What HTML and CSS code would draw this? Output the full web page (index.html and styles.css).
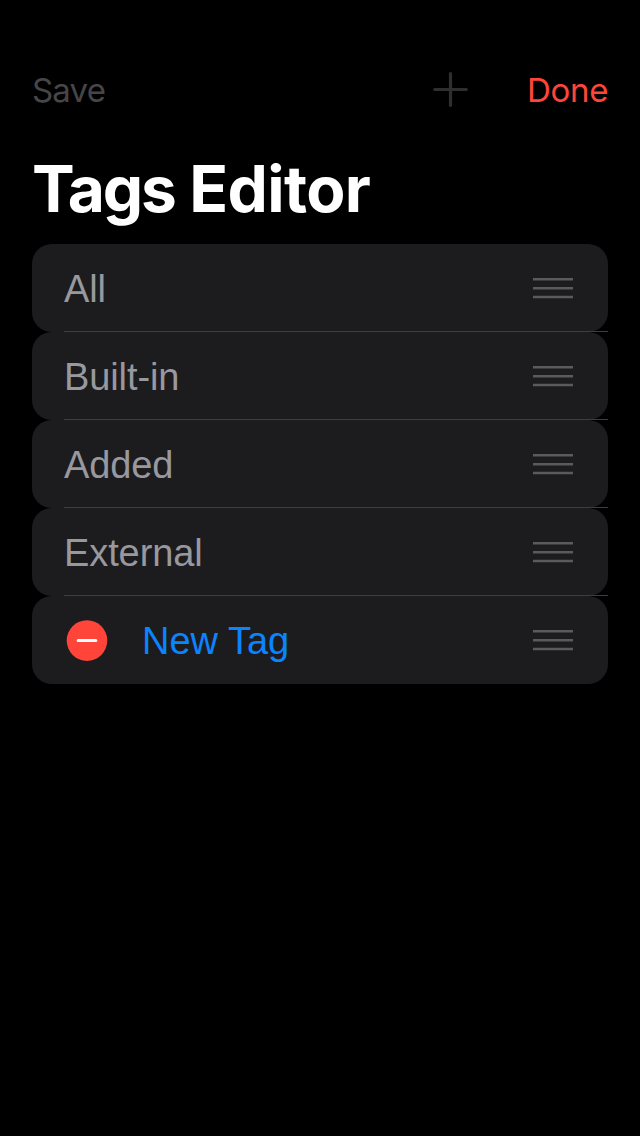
FILE: index.html
```html
<!DOCTYPE html>
<html lang="en">
<head>
<meta charset="utf-8">
<title>Tags Editor</title>
<link rel="stylesheet" href="styles.css">
</head>
<body>
<header class="navbar">
  <span class="save">Save</span>
  <svg class="add" width="36" height="36" viewBox="0 0 36 36"><path d="M18.5 1.7V33.3M2.7 17.5H34.3"/></svg>
  <span class="done">Done</span>
</header>
<h1 class="title"><span class="title-lead">Tags</span> Editor</h1>
<ul class="list">
  <li class="row"><span class="label">All</span><svg class="grip" width="42" height="24" viewBox="0 0 42 24"><path d="M1 3.2H41M1 12.2H41M1 21H41"/></svg></li>
  <li class="row"><span class="label">Built-in</span><svg class="grip" width="42" height="24" viewBox="0 0 42 24"><path d="M1 3.2H41M1 12.2H41M1 21H41"/></svg></li>
  <li class="row"><span class="label">Added</span><svg class="grip" width="42" height="24" viewBox="0 0 42 24"><path d="M1 3.2H41M1 12.2H41M1 21H41"/></svg></li>
  <li class="row"><span class="label">External</span><svg class="grip" width="42" height="24" viewBox="0 0 42 24"><path d="M1 3.2H41M1 12.2H41M1 21H41"/></svg></li>
  <li class="row"><svg class="remove" width="42" height="42" viewBox="0 0 42 42"><circle cx="21" cy="20.6" r="20.3"/><path d="M12.2 20.6H29.8"/></svg><span class="label new-tag">New Tag</span><svg class="grip" width="42" height="24" viewBox="0 0 42 24"><path d="M1 3.2H41M1 12.2H41M1 21H41"/></svg></li>
</ul>
</body>
</html>
```
FILE: styles.css
```css
* { box-sizing: border-box; }
body {
  margin: 0;
  padding: 40px 32px 0;
  min-height: 1136px;
  background: #000;
  font-family: "Liberation Sans", Arial, sans-serif;
}
.navbar {
  display: flex;
  align-items: center;
  height: 100px;
  font: 400 33px/40px Inter, sans-serif;
}
.save {
  color: #464648;
  letter-spacing: -0.8px;
}
.add {
  margin-left: auto;
  margin-right: 59px;
  fill: none;
  stroke: #2f2f30;
  stroke-width: 3.2;
  stroke-linecap: round;
}
.done {
  width: 81px;
  color: #ff453a;
  letter-spacing: -0.3px;
  text-align: right;
}
.title {
  margin: 0;
  height: 104px;
  padding-top: 9px;
  color: #fff;
  font: 700 64px/80px Inter, sans-serif;
  letter-spacing: -0.6px;
  white-space: nowrap;
}
.title-lead { letter-spacing: -2.2px; }
.list {
  margin: 0;
  padding: 0;
  list-style: none;
}
.row {
  position: relative;
  display: flex;
  align-items: center;
  height: 88px;
  padding: 0 34px 0 32px;
  border-radius: 20px;
  background: #1c1c1e;
}
.row:not(:last-child)::after {
  content: "";
  position: absolute;
  left: 32px;
  right: 0;
  bottom: 0;
  height: 1px;
  background: #3d3d41;
}
.label {
  padding-top: 2px;
  color: #98989f;
  font-size: 38px;
  line-height: 44px;
  letter-spacing: -0.1px;
  white-space: nowrap;
}
.remove {
  margin: 1px 34px 0 2px;
  fill: #ff453a;
  stroke: none;
}
.remove path {
  stroke: #fff;
  stroke-width: 3;
  stroke-linecap: round;
}
.new-tag {
  color: #0a84ff;
  letter-spacing: 0;
}
.grip {
  margin-left: auto;
  fill: none;
  stroke: #5a5a5d;
  stroke-width: 2.5;
}
```
